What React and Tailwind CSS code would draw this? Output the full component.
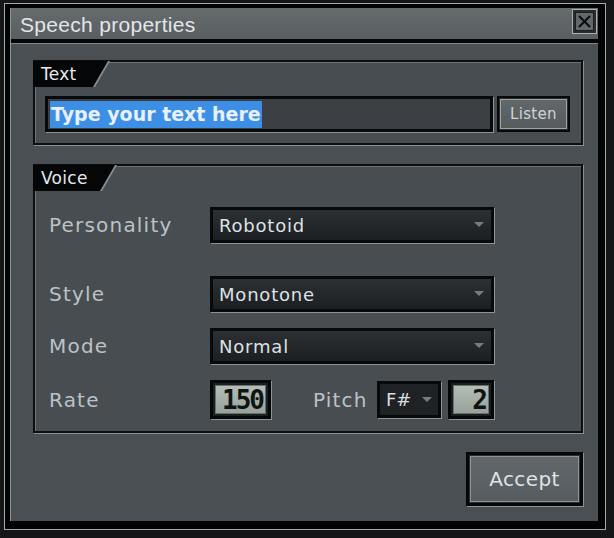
import React from "react";

const font = { fontFamily: '"DejaVu Sans", "Liberation Sans", sans-serif' };

function Tab({ label, w }) {
  return (
    <div className="-ml-[2px] -mt-[1px] relative h-[26px]" style={{ width: w }}>
      <div
        className="absolute inset-0 bg-[#8a8f92]"
        style={{ clipPath: "polygon(0 0, 100% 0, calc(100% - 15px) 100%, 0 100%)" }}
      />
      <div
        className="absolute inset-0 bg-[#050607] flex items-center pl-[8px] pt-[2px] text-[17px] text-[#e6eaec] tracking-[0.3px]"
        style={{ clipPath: "polygon(0 0, calc(100% - 2px) 0, calc(100% - 17px) 100%, 0 100%)", ...font }}
      >
        {label}
      </div>
    </div>
  );
}

function Arrow() {
  return (
    <svg width="10" height="6" viewBox="0 0 10 6" className="shrink-0">
      <path d="M0 0 L10 0 L5 5 Z" fill="#767c80" />
    </svg>
  );
}

function Dropdown({ value, w = 284 }) {
  return (
    <div
      className="h-[36px] border-[3px] border-[#08090a] shadow-[1px_1px_0_0_#8e9396] bg-gradient-to-b from-[#2c3034] to-[#1c1f22] flex items-center justify-between pl-[6px] pr-[7px]"
      style={{ width: w }}
    >
      <span className="text-[18px] text-[#dde2e4] tracking-[0.8px]" style={font}>
        {value}
      </span>
      <Arrow />
    </div>
  );
}

const lcdFont = { fontFamily: '"DejaVu Sans Mono", monospace' };

function Lcd({ value, w }) {
  return (
    <div
      className="h-[39px] border-[3px] border-[#060708] shadow-[1px_1px_0_0_#8e9396] bg-[#1b1e20] p-[2px]"
      style={{ width: w }}
    >
      <div className="h-full w-full bg-gradient-to-b from-[#b4beb6] to-[#98a29a] border border-[#6a716c] flex items-center justify-end pr-[2px]">
        <span
          className="text-[26px] font-bold leading-none text-[#101412] tracking-[-2px]"
          style={lcdFont}
        >
          {value}
        </span>
      </div>
    </div>
  );
}

function Label({ children, className = "" }) {
  return (
    <span
      className={"text-[20px] text-[#bcc2c5] tracking-[1.2px] " + className}
      style={font}
    >
      {children}
    </span>
  );
}

const groupCls =
  "border-2 border-[#0c0e0f] shadow-[1px_1px_0_0_#8a8f92,inset_1px_1px_0_0_#6f7477] bg-[#484d51]";

export default function App() {
  return (
    <div className="w-[614px] h-[538px] bg-[#141618] pt-[3px] pl-[4px] overflow-hidden">
      <div className="w-[602px] h-[527px] border border-[#a3a8ab] bg-[#020303] pt-[4px] pl-[5px] pr-[7px] pb-[8px] flex flex-col">
        <div className="flex-1 flex flex-col border-l border-[#8d9295]">
          {/* title bar */}
          <div className="h-[31px] bg-gradient-to-b from-[#666b6e] to-[#595e61] flex items-start justify-between pl-[9px]">
            <span
              className="mt-[1px] text-[21px] text-[#e2e6e8] tracking-[0.3px]"
              style={{ fontFamily: '"Liberation Sans", Arial, sans-serif' }}
            >
              Speech properties
            </span>
            <div className="mt-[1px] mr-[1px] w-[25px] h-[25px] border border-[#a9aeb1] bg-[#2a2d2f] p-[2px]">
              <div className="w-full h-full bg-[#63686b] border border-[#1a1c1e] flex items-center justify-center">
                <svg width="13" height="13" viewBox="0 0 13 13">
                  <path d="M1 1 L12 12 M12 1 L1 12" stroke="#0a0b0c" strokeWidth="2" />
                </svg>
              </div>
            </div>
          </div>
          <div className="h-[4px] bg-[#050606]" />
          {/* body */}
          <div className="flex-1 bg-[#4a4f53] border-t border-[#80868a] pl-[22px] pr-[15px] pt-[16px] flex flex-col">
            {/* Text group */}
            <div className={"h-[85px] flex flex-col " + groupCls}>
              <Tab label="Text" w={77} />
              <div className="mt-[9px] ml-[10px] flex items-stretch gap-[4px]">
                <div className="w-[448px] h-[36px] border-[3px] border-[#08090a] shadow-[1px_1px_0_0_#8e9396] bg-[#3c4044] flex items-center pl-[2px]">
                  <span
                    className="bg-[#3d8fe6] h-[27px] flex items-center px-[1px] text-[19px] font-bold text-[#e8f0f8] leading-none"
                    style={font}
                  >
                    Type your text here
                  </span>
                </div>
                <div className="w-[73px] h-[36px] border-[2px] border-[#08090a] bg-[#2a2d30] p-[1px]">
                  <div className="w-full h-full border border-[#9da2a5] bg-gradient-to-b from-[#62676a] to-[#565b5e] flex items-center justify-center">
                    <span className="text-[15px] text-[#cfd4d6] tracking-[0.3px]" style={font}>
                      Listen
                    </span>
                  </div>
                </div>
              </div>
            </div>

            {/* Voice group */}
            <div className={"mt-[19px] h-[269px] flex flex-col " + groupCls}>
              <Tab label="Voice" w={84} />
              <div className="flex flex-col pl-[14px]">
                <div className="mt-[16px] flex items-center h-[36px]">
                  <Label className="w-[161px]">Personality</Label>
                  <Dropdown value="Robotoid" />
                </div>
                <div className="mt-[33px] flex items-center h-[36px]">
                  <Label className="w-[161px]">Style</Label>
                  <Dropdown value="Monotone" />
                </div>
                <div className="mt-[16px] flex items-center h-[36px]">
                  <Label className="w-[161px]">Mode</Label>
                  <Dropdown value="Normal" />
                </div>
                <div className="mt-[16px] flex items-center h-[39px]">
                  <Label className="w-[161px]">Rate</Label>
                  <Lcd value="150" w={61} />
                  <Label className="ml-[42px] w-[64px] tracking-[0.6px]">Pitch</Label>
                  <div className="h-[37px] w-[64px] border-[3px] border-[#08090a] shadow-[1px_1px_0_0_#8e9396] bg-[#1f2225] flex items-center justify-between pl-[6px] pr-[6px]">
                    <span className="text-[18px] text-[#d9dee0]" style={font}>
                      F#
                    </span>
                    <Arrow />
                  </div>
                  <div className="ml-[7px]">
                    <Lcd value="2" w={46} />
                  </div>
                </div>
              </div>
            </div>

            {/* Accept */}
            <div className="mt-[19px] flex justify-end">
              <div className="w-[117px] h-[54px] border-[3px] border-[#060708] shadow-[1px_1px_0_0_#8e9396] bg-[#2a2d30] p-[1px]">
                <div className="w-full h-full border border-[#8f9497] bg-gradient-to-b from-[#62676b] to-[#575c60] flex items-center justify-center">
                  <span className="text-[20px] text-[#dfe3e5] tracking-[0.4px]" style={font}>
                    Accept
                  </span>
                </div>
              </div>
            </div>
          </div>
        </div>
      </div>
    </div>
  );
}
